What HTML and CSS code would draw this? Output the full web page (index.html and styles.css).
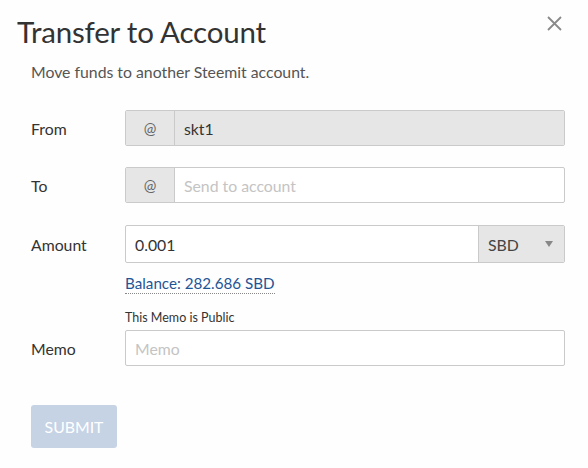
FILE: index.html
```html
<!DOCTYPE html>
<html>
<head>
<meta charset="utf-8">
<link rel="stylesheet" href="styles.css">
</head>
<body>
<div class="modal">
  <button class="close" aria-label="Close">
    <svg width="15" height="15" viewBox="0 0 15 15"><path d="M1 1L14 14M14 1L1 14" stroke="#8a8a8a" stroke-width="1.8" fill="none"/></svg>
  </button>
  <h2 class="title">Transfer to Account</h2>
  <p class="subtitle">Move funds to another Steemit account.</p>
  <div class="form">
    <div class="row row-from">
      <label class="label">From</label>
      <div class="group disabled">
        <span class="addon">@</span>
        <span class="field">skt1</span>
      </div>
    </div>
    <div class="row row-to">
      <label class="label">To</label>
      <div class="group">
        <span class="addon">@</span>
        <span class="field placeholder">Send to account</span>
      </div>
    </div>
    <div class="row row-amount">
      <label class="label">Amount</label>
      <div class="group tall">
        <span class="field">0.001</span>
        <span class="select">SBD<span class="caret"></span></span>
      </div>
    </div>
    <div class="row row-balance">
      <span></span>
      <div><a class="balance">Balance: 282.686 SBD</a></div>
    </div>
    <div class="row row-note">
      <span></span>
      <div class="note">This Memo is Public</div>
    </div>
    <div class="row row-memo">
      <label class="label">Memo</label>
      <div class="group">
        <span class="field placeholder">Memo</span>
      </div>
    </div>
  </div>
  <button class="submit">Submit</button>
</div>
</body>
</html>
```
FILE: styles.css
```css
* { box-sizing: border-box; }
html, body { margin: 0; padding: 0; background: #fefefe; }
body { font-family: "Lato", "Liberation Sans", sans-serif; color: #333; }
.modal { position: relative; width: 588px; height: 468px; padding: 0; }
.close {
  position: absolute; top: 16px; left: 547px;
  width: 15px; height: 15px; padding: 0; border: 0; background: none;
}
.close svg { display: block; }
.title {
  margin: 0; padding: 14px 0 0 17px;
  font-size: 29.5px; font-weight: 400; color: #333; line-height: 36px;
  letter-spacing: -0.2px;
}
.subtitle {
  margin: 12px 0 0 31px; font-size: 15.8px; line-height: 20px; color: #555;
}
.form { margin-top: 28px; }
.row {
  display: grid; grid-template-columns: 94px 440px; align-items: center;
  padding-left: 31px;
}
.label { font-size: 15.8px; color: #333; }
.group {
  display: flex; height: 36px; border: 1px solid #cacaca; border-radius: 2px;
  background: #fff; overflow: hidden;
}
.group.tall { height: 38px; }
.group.disabled .field { background: #e6e6e6; }
.addon {
  width: 49px; flex: none; display: flex; align-items: center; justify-content: center;
  background: #e6e6e6; border-right: 1px solid #cacaca; font-size: 15px; color: #666;
}
.field {
  flex: 1; display: flex; align-items: center; padding-left: 9px;
  font-size: 15.8px; color: #333;
}
.field.placeholder { color: #c4c4c4; }
.select {
  width: 86px; flex: none; display: flex; align-items: center; justify-content: space-between;
  padding: 0 9px 0 9px; background: #e6e6e6; border-left: 1px solid #cacaca;
  font-size: 15.8px; color: #444;
}
.caret {
  width: 0; height: 0; border-left: 4px solid transparent; border-right: 4px solid transparent;
  border-top: 6px solid #888; margin-right: 2px;
}
.row-to { margin-top: 21px; }
.row-amount { margin-top: 22px; }
.row-balance { margin-top: 10px; }
.balance {
  font-size: 15.2px; color: #1f5596; text-decoration: none;
  border-bottom: 1px dotted #888; padding-bottom: 1px; line-height: 20px;
}
.row-note { margin-top: 17px; }
.note { font-size: 12.5px; color: #333; line-height: 16px; }
.row-memo { margin-top: 4px; }
.submit {
  display: block; margin: 39px 0 0 31px; width: 86px; height: 43px;
  border: 0; border-radius: 3px; background: #c5d3e5; color: #fff;
  font-family: inherit; font-size: 15.8px; text-transform: uppercase; letter-spacing: 0;
}
```
